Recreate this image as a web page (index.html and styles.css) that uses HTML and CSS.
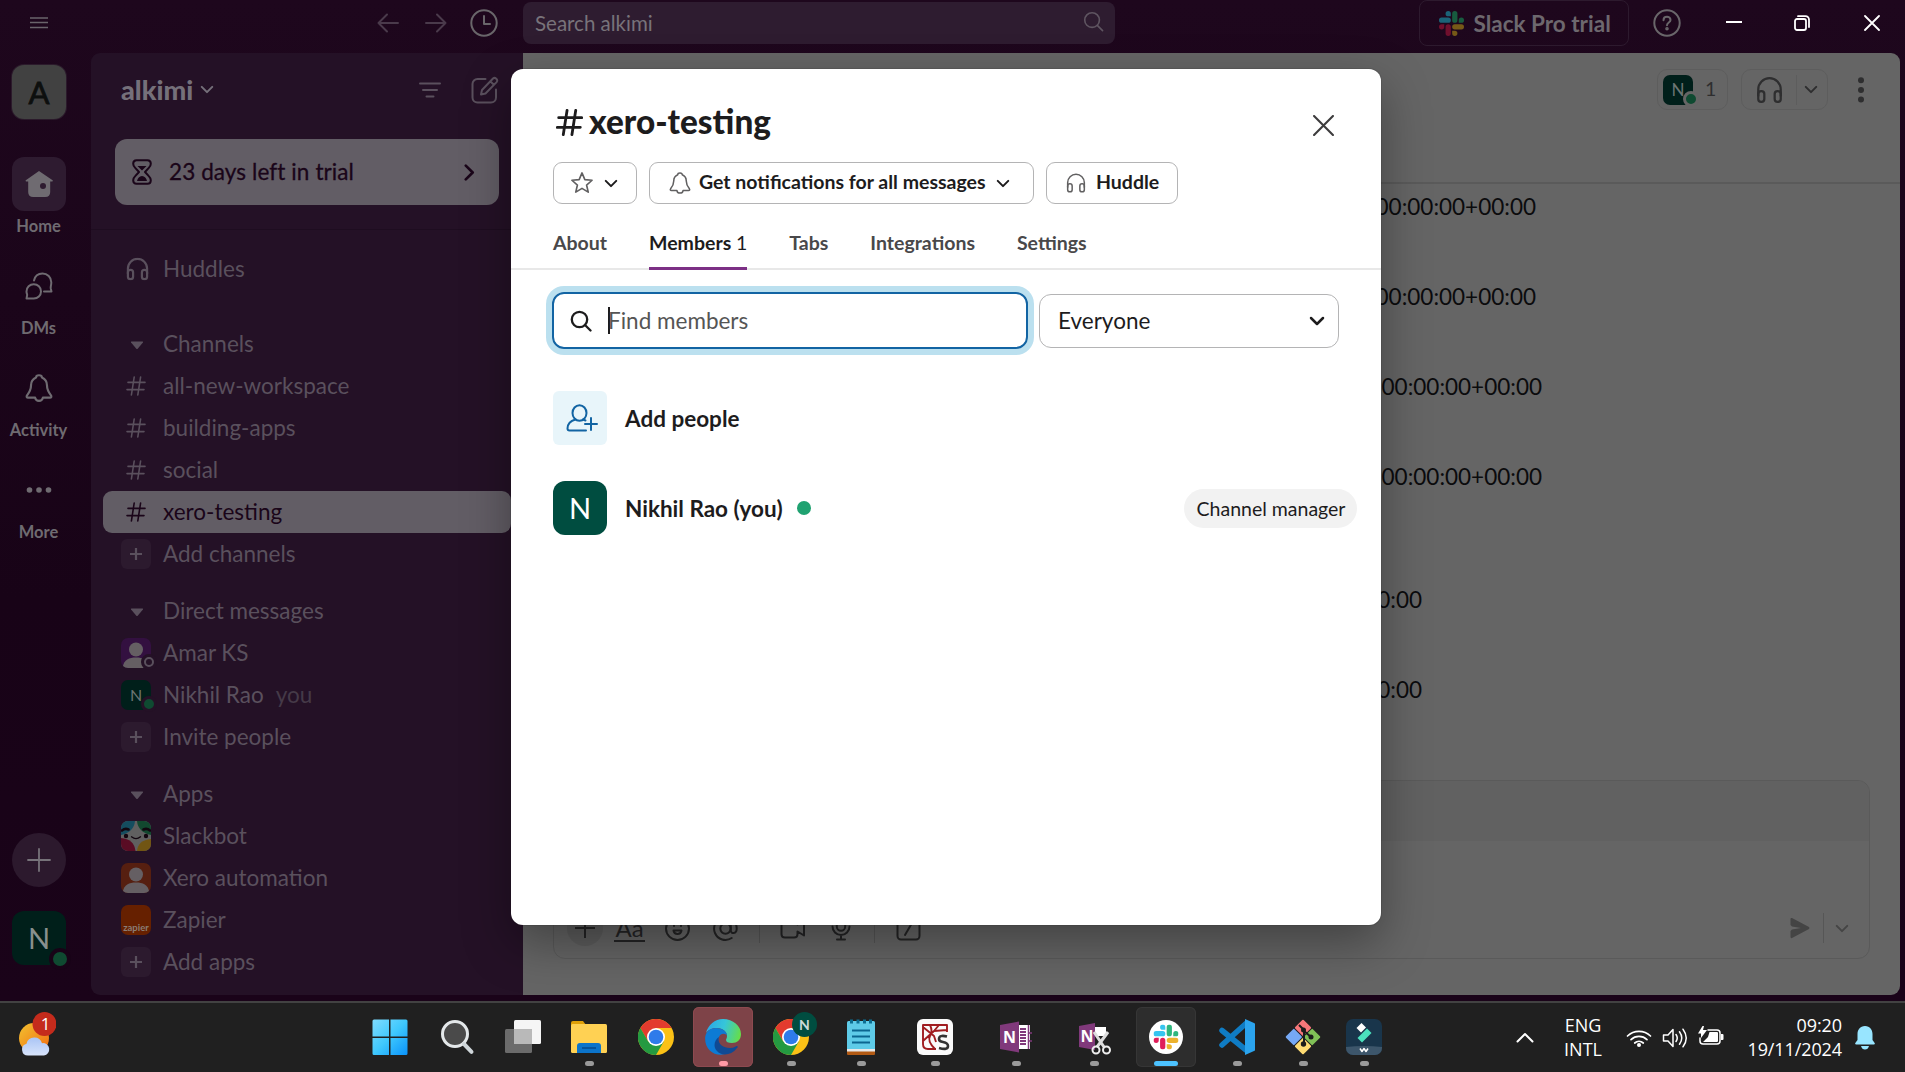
FILE: index.html
```html
<!DOCTYPE html>
<html lang="en">
<head>
<meta charset="utf-8">
<title>xero-testing - alkimi - Slack</title>
<link rel="stylesheet" href="styles.css">
</head>
<body>
<svg class="sprite" width="0" height="0" aria-hidden="true">
  <symbol id="hash" viewBox="0 0 20 20"><path d="M8.2 1 5.4 19M14.6 1l-2.8 18M2 6.4h17M1 13.6h17"/></symbol>
  <symbol id="headphones" viewBox="0 0 24 24"><path d="M2 17v-5.5a10 10 0 0 1 20 0V17"/><rect x="2" y="13" width="5.4" height="9.6" rx="2.6"/><rect x="16.6" y="13" width="5.4" height="9.6" rx="2.6"/></symbol>
  <symbol id="chev" viewBox="0 0 16 10"><path d="M2 2l6 6 6-6"/></symbol>
  <symbol id="caret" viewBox="0 0 14 9"><path d="M1.5.5h11q1 0 .4.9L7.9 7.6q-.9 1-1.8 0L1.1 1.4Q.5.5 1.5.5z"/></symbol>
  <symbol id="bell" viewBox="0 0 26 26"><path d="M13 1.2c-2.4 0-2.7 1.6-2.7 2C7.5 4.400 5.600 7 5.600 10.500c0 4.500-1.300 6.300-3.700 9.400-.8 1.100-.3 2 .9 2h6.600c.6 4 6.600 4 7.200 0h6.600c1.200 0 1.700-.9.900-2-2.400-3.100-3.700-4.900-3.700-9.400 0-3.500-1.900-6.100-4.700-7.300 0-.4-.3-2-2.700-2z"/></symbol>
  <symbol id="lens" viewBox="0 0 22 22"><circle cx="9.500" cy="9.500" r="7.700"/><path d="M15 15l5.500 5.500"/></symbol>
  <symbol id="person" viewBox="0 0 30 30"><rect width="30" height="30" rx="7"/><circle cx="15" cy="11.500" r="7" class="fig"/><path d="M2 28c1-6 6-8.500 13-8.500S27 22 28 28q-2 2-5 2H7q-3 0-5-2z" class="fig"/></symbol>
  <symbol id="slack" viewBox="0 0 24 24">
    <path fill="#e01e5a" d="M5.042 15.165a2.528 2.528 0 0 1-2.520 2.523A2.528 2.528 0 0 1 0 15.165a2.527 2.527 0 0 1 2.522-2.520h2.520v2.520zM6.313 15.165a2.527 2.527 0 0 1 2.521-2.520 2.527 2.527 0 0 1 2.521 2.520v6.313A2.528 2.528 0 0 1 8.834 24a2.528 2.528 0 0 1-2.521-2.522v-6.313z"/>
    <path fill="#36c5f0" d="M8.834 5.042a2.528 2.528 0 0 1-2.521-2.520A2.528 2.528 0 0 1 8.834 0a2.528 2.528 0 0 1 2.521 2.522v2.520H8.834zM8.834 6.313a2.528 2.528 0 0 1 2.521 2.521 2.528 2.528 0 0 1-2.521 2.521H2.522A2.528 2.528 0 0 1 0 8.834a2.528 2.528 0 0 1 2.522-2.521h6.312z"/>
    <path fill="#2eb67d" d="M18.956 8.834a2.528 2.528 0 0 1 2.522-2.521A2.528 2.528 0 0 1 24 8.834a2.528 2.528 0 0 1-2.522 2.521h-2.522V8.834zM17.688 8.834a2.528 2.528 0 0 1-2.523 2.521 2.527 2.527 0 0 1-2.520-2.521V2.522A2.527 2.527 0 0 1 15.165 0a2.528 2.528 0 0 1 2.523 2.522v6.312z"/>
    <path fill="#ecb22e" d="M15.165 18.956a2.528 2.528 0 0 1 2.523 2.522A2.528 2.528 0 0 1 15.165 24a2.527 2.527 0 0 1-2.520-2.522v-2.522h2.520zM15.165 17.688a2.527 2.527 0 0 1-2.520-2.523 2.526 2.526 0 0 1 2.520-2.520h6.313A2.527 2.527 0 0 1 24 15.165a2.528 2.528 0 0 1-2.522 2.523h-6.313z"/>
  </symbol>
  <symbol id="chrome" viewBox="0 0 36 36">
    <circle cx="18" cy="18" r="18" fill="#fbc116"/>
    <path fill="#e33b2e" d="M2.400 9A18 18 0 0 1 33.600 9H18L10.200 22.500z"/>
    <path fill="#249a41" d="M2.400 9A18 18 0 0 0 18 36l7.800-13.500H10.200z"/>
    <circle cx="18" cy="18" r="9" fill="#fff"/><circle cx="18" cy="18" r="7.300" fill="#2e7bea"/>
  </symbol>
</svg>

<div class="app">
  <header class="topbar">
    <svg class="menu" viewBox="0 0 18 12"><path d="M0 1h18M0 5.500h18M0 10.500h18"/></svg>
    <svg class="arrow back" viewBox="0 0 22 20"><path d="M21 10H1.500M10 1.500 1.500 10l8.500 8.500"/></svg>
    <svg class="arrow fwd" viewBox="0 0 22 20"><path d="M1 10h19.500M12 1.500l8.500 8.500-8.500 8.500"/></svg>
    <svg class="clock" viewBox="0 0 28 28"><circle cx="14" cy="14" r="12.700"/><path d="M14 7v8h6"/></svg>
    <div class="search"><span>Search alkimi</span><svg viewBox="0 0 22 22"><use href="#lens"/></svg></div>
    <div class="trial-pill"><svg viewBox="0 0 24 24"><use href="#slack"/></svg><span>Slack Pro trial</span></div>
    <div class="help"><svg viewBox="0 0 28 28"><circle cx="14" cy="14" r="12.700"/><path d="M10.500 11.200c0-4.600 7-4.300 7-.3 0 2.600-3.500 2.500-3.500 5.300"/><circle cx="14" cy="19.700" r=".8"/></svg></div>
    <svg class="win min" viewBox="0 0 16 16"><path d="M0 7h16"/></svg>
    <svg class="win max" viewBox="0 0 16 16"><rect x="1" y="4" width="11" height="11" rx="2"/><path d="M4 1.200h7.500a3.500 3.500 0 0 1 3.500 3.500V12"/></svg>
    <svg class="win close" viewBox="0 0 16 16"><path d="M1 1l14 14M15 1 1 15"/></svg>
  </header>

  <div class="workspace">
    <nav class="rail">
      <div class="team">A</div>
      <div class="rail-item home"><div class="tile"><svg viewBox="0 0 28 28"><path class="solid" d="M14 1 .8 10.200q-.6 1 .4 1.300h2v10.500q0 5 5 5h12q5 0 5-5V11.500h2q1-.3.400-1.300z"/><circle class="hole" cx="18" cy="16" r="3"/></svg></div><span>Home</span></div>
      <div class="rail-item"><div class="tile"><svg viewBox="0 0 28 28"><path d="M9 8.500C10 4 13.500 1.500 17.500 1.500a8.800 8.800 0 0 1 8.800 8.800c0 3.700-1 4-.5 6.500l.7 2.700h-7.500M8.800 12.200a7.200 7.200 0 1 1 0 14.400H1.500l.6-3.200c.4-1.500-.6-1.500-.6-4a7.200 7.200 0 0 1 7.300-7.200z"/></svg></div><span>DMs</span></div>
      <div class="rail-item"><div class="tile"><svg viewBox="0 0 26 26"><use href="#bell"/></svg></div><span>Activity</span></div>
      <div class="rail-item"><div class="tile"><svg viewBox="0 0 28 28"><circle class="solid" cx="4.500" cy="14" r="2.800"/><circle class="solid" cx="14" cy="14" r="2.800"/><circle class="solid" cx="23.500" cy="14" r="2.800"/></svg></div><span>More</span></div>
      <div class="create"><svg viewBox="0 0 24 24"><path d="M12 1v22M1 12h22"/></svg></div>
      <div class="me">N<i></i></div>
    </nav>

    <aside class="sidebar">
      <div class="side-head"><b>alkimi</b><svg class="dn" viewBox="0 0 16 10"><use href="#chev"/></svg>
        <svg class="filter" viewBox="0 0 22 16"><path d="M1 1.500h20M4 8h14M7.500 14.500h7"/></svg>
        <svg class="edit" viewBox="0 0 28 28"><path d="M14.500 3H6.500A5 5 0 0 0 1.500 8v13.500a5 5 0 0 0 5 5H20a5 5 0 0 0 5-5v-8M10 18.500l1-4.500L22 2.500q1.500-1.300 3.300.2 1.700 1.700.3 3.400L14.500 17.500zM19.500 5.500l3.400 3.300"/></svg></div>
      <div class="trial"><svg class="glass" viewBox="0 0 20 26"><path d="M4.500 1.200h11q3.300 0 3.300 3.500 0 2.200-2 4.200L13 13l3.800 4.100q2 2 2 4.200 0 3.500-3.300 3.500h-11q-3.300 0-3.300-3.500 0-2.200 2-4.200L7 13 3.200 8.900q-2-2-2-4.200 0-3.500 3.300-3.500z"/><path class="sand" d="M5.500 7h9L10 11.500zM5 22q1-4.500 5-5 4 .5 5 5z"/></svg><span>23 days left in trial</span><svg class="rt" viewBox="0 0 10 16"><path d="M1.500 1.500 8 8l-6.500 6.500"/></svg></div>
      <div class="side-line"></div>
      <div class="row huddles"><svg class="ico hp" viewBox="0 0 24 24"><use href="#headphones"/></svg><span>Huddles</span></div>

      <div class="row sec first"><svg class="caret" viewBox="0 0 14 9"><use href="#caret"/></svg><span>Channels</span></div>
      <div class="row"><svg class="ico" viewBox="0 0 20 20"><use href="#hash"/></svg><span>all-new-workspace</span></div>
      <div class="row"><svg class="ico" viewBox="0 0 20 20"><use href="#hash"/></svg><span>building-apps</span></div>
      <div class="row"><svg class="ico" viewBox="0 0 20 20"><use href="#hash"/></svg><span>social</span></div>
      <div class="row active"><svg class="ico" viewBox="0 0 20 20"><use href="#hash"/></svg><span>xero-testing</span></div>
      <div class="row"><div class="plus"><svg viewBox="0 0 12 12"><path d="M6 0v12M0 6h12"/></svg></div><span>Add channels</span></div>

      <div class="row sec"><svg class="caret" viewBox="0 0 14 9"><use href="#caret"/></svg><span>Direct messages</span></div>
      <div class="row"><div class="av"><svg class="amar" viewBox="0 0 30 30"><use href="#person"/></svg><i class="off"></i></div><span>Amar KS</span></div>
      <div class="row"><div class="av green">N<i></i></div><span>Nikhil Rao</span><span class="you">you</span></div>
      <div class="row"><div class="plus"><svg viewBox="0 0 12 12"><path d="M6 0v12M0 6h12"/></svg></div><span>Invite people</span></div>

      <div class="row sec"><svg class="caret" viewBox="0 0 14 9"><use href="#caret"/></svg><span>Apps</span></div>
      <div class="row"><div class="av"><svg class="bot" viewBox="0 0 30 30"><rect width="30" height="30" rx="7" fill="#606060"/><path fill="#144d5f" d="M0 14V7a7 7 0 0 1 7-7h7q-1 11-14 14z"/><path fill="#12482f" d="M16 0h7a7 7 0 0 1 7 7v7Q17 11 16 0z"/><path fill="#590c24" d="M0 17q13 1 14.500 13H7a7 7 0 0 1-7-7z"/><path fill="#715513" d="M30 18v5a7 7 0 0 1-7 7h-7q1-11 14-12z"/><path d="M1 9.500q3-2.500 6.500-1M22.500 8.500q3.500-1.500 6.500 1" stroke="#12060f" stroke-width="2.600" fill="none"/><path d="M10.500 15.800q4.500 3.500 9 0" stroke="#12060f" stroke-width="1.300" fill="none"/><circle cx="5" cy="15" r="2.200" fill="#12060f"/><circle cx="25" cy="15" r="2.200" fill="#12060f"/></svg></div><span>Slackbot</span></div>
      <div class="row"><div class="av"><svg class="xero" viewBox="0 0 30 30"><use href="#person"/></svg></div><span>Xero automation</span></div>
      <div class="row"><div class="av zap">zapier</div><span>Zapier</span></div>
      <div class="row"><div class="plus"><svg viewBox="0 0 12 12"><path d="M6 0v12M0 6h12"/></svg></div><span>Add apps</span></div>
    </aside>

    <main class="main">
      <div class="chan-head">
        <div class="pill members"><div class="av green">N<i></i></div><span>1</span></div>
        <div class="pill huddle"><svg class="hp" viewBox="0 0 24 24"><use href="#headphones"/></svg><i></i><svg class="dn" viewBox="0 0 16 10"><use href="#chev"/></svg></div>
        <svg class="kebab" viewBox="0 0 6 26"><circle cx="3" cy="3.300" r="3"/><circle cx="3" cy="13" r="3"/><circle cx="3" cy="22.500" r="3"/></svg>
      </div>
      <div class="msgs">
        <p class="a">00:00:00+00:00</p><p class="a">00:00:00+00:00</p><p class="b">00:00:00+00:00</p><p class="b">00:00:00+00:00</p><p class="c gap">00:00</p><p class="c">00:00</p>
      </div>
      <div class="composer">
        <div class="fmt"></div>
        <div class="actions">
          <div class="add"><svg viewBox="0 0 20 20"><path d="M10 0v20M0 10h20"/></svg></div>
          <span class="aa">Aa</span>
          <svg class="emoji" viewBox="0 0 25 25"><circle cx="12.500" cy="12.500" r="11.500"/><path d="M8.500 14.500c.8 4.500 7.200 4.500 8 0z"/><path d="M9 8v2M16 8v2"/></svg>
          <svg class="at" viewBox="0 0 25 25"><circle cx="12.500" cy="12.500" r="5.200"/><path d="M17.700 7.500v6.500c0 4.500 6 4 6-1.500a11.300 11.300 0 1 0-5 9.500"/></svg>
          <i></i>
          <svg class="video" viewBox="0 0 26 22"><path d="M5 1.500h9q3.500 0 3.500 3.500v2.500l6.500-4v15l-6.500-4V17q0 3.500-3.500 3.500H5Q1.500 20.500 1.500 17V5Q1.500 1.500 5 1.500z"/></svg>
          <svg class="mic" viewBox="0 0 20 26"><rect x="5.800" y="1.200" width="8.400" height="14.500" rx="4.200"/><path d="M1.500 11.500a8.500 8.500 0 0 0 17 0M10 20v4M6 24.500h8"/></svg>
          <i class="s2"></i>
          <svg class="slash" viewBox="0 0 25 25"><rect x="1.500" y="1.500" width="22" height="22" rx="3.500"/><path d="M16 7l-7 12"/></svg>
          <svg class="send" viewBox="0 0 20 22"><path d="M.5 2Q.5.500 2 1l17 9q1 1 0 2L2 21Q.5 21.500.500 20v-6l1.500-1.500 9-1.500-9-1.500L.500 8z"/></svg>
          <i class="s3"></i>
          <svg class="dn" viewBox="0 0 16 10"><use href="#chev"/></svg>
        </div>
      </div>
    </main>
  </div>

  <section class="modal">
    <div class="m-head"><svg class="hash" viewBox="0 0 20 20"><use href="#hash"/></svg><h1>xero-testing</h1>
      <svg class="x" viewBox="0 0 20 20"><path d="M1 1l18 18M19 1 1 19"/></svg></div>
    <div class="m-btns">
      <div class="btn star"><svg viewBox="0 0 24 24"><path d="M12 1l3.100 7.300 7.900.7-6 5.200 1.800 7.800L12 17.900 5.200 22 7 14.200 1 9l7.900-.7z"/></svg><svg class="dn" viewBox="0 0 16 10"><use href="#chev"/></svg></div>
      <div class="btn notif"><svg viewBox="0 0 26 26"><use href="#bell"/></svg><span>Get notifications for all messages</span><svg class="dn" viewBox="0 0 16 10"><use href="#chev"/></svg></div>
      <div class="btn hud"><svg viewBox="0 0 24 24"><use href="#headphones"/></svg><span>Huddle</span></div>
    </div>
    <div class="m-tabs"><span>About</span><span class="current">Members <em>1</em></span><span>Tabs</span><span>Integrations</span><span>Settings</span></div>
    <div class="m-find">
      <div class="find"><svg viewBox="0 0 22 22"><use href="#lens"/></svg><i></i><span>Find members</span></div>
      <div class="select"><span>Everyone</span><svg class="dn" viewBox="0 0 16 10"><use href="#chev"/></svg></div>
    </div>
    <div class="m-row"><div class="box blue"><svg viewBox="0 0 32 28"><ellipse cx="13.500" cy="9" rx="7" ry="7.800"/><path d="M9.500 15.500C4 17 1.500 20 1.500 24.500q0 2 2 2H20M17 15.500l2.500 1M25 14v12M19 20h12"/></svg></div><b>Add people</b></div>
    <div class="m-row last"><div class="box">N</div><b>Nikhil Rao (you)</b><i></i><span class="role">Channel manager</span></div>
  </section>
</div>

<footer class="taskbar">
  <svg class="weather" viewBox="0 0 40 46"><defs><linearGradient id="sun" x1="0" y1="0" x2="1" y2="1"><stop offset="0" stop-color="#f2c230"/><stop offset="1" stop-color="#f26a10"/></linearGradient><linearGradient id="cloud" x1="0" y1="0" x2="0" y2="1"><stop offset="0" stop-color="#a9c4f5"/><stop offset="1" stop-color="#d8e4fb"/></linearGradient></defs>
    <circle cx="18" cy="27" r="15" fill="url(#sun)"/><path fill="url(#cloud)" d="M12 44.500a6 6 0 0 1-1.500-11.800 8 8 0 0 1 15.500-.5 6.200 6.200 0 0 1 2 12.300z"/><circle cx="28.500" cy="13" r="12" fill="#c42b1c"/><text x="29.500" y="18.500" text-anchor="middle" class="cnt">1</text></svg>
  <div class="apps">
    <div class="t"><svg viewBox="0 0 36 36"><defs><linearGradient id="win" x1="0" y1="0" x2="1" y2="1"><stop offset="0" stop-color="#7fdcff"/><stop offset=".5" stop-color="#3fc8fd"/><stop offset="1" stop-color="#0a93fb"/></linearGradient></defs><path fill="url(#win)" d="M2 .5h15v17H.500V2Q.500.500 2 .500zM18.500.500H34q1.500 0 1.500 1.500v15.500h-17zM.500 19H17v17H2q-1.500 0-1.500-1.500zM18.500 19h17v15.500q0 1.500-1.500 1.500H18.500z"/></svg></div>
    <div class="t"><svg viewBox="0 0 36 36"><circle cx="16" cy="15" r="12.500" fill="#4a4a4a" stroke="#e4e8ea" stroke-width="3"/><path d="M25 25l7.500 7.800" stroke="#cfd6da" stroke-width="4" stroke-linecap="round"/></svg></div>
    <div class="t"><svg viewBox="0 0 36 36"><rect x="9" y="1" width="27" height="24" rx="1.500" fill="#f5f5f5"/><rect x="0" y="10" width="27" height="24" rx="1.500" fill="#6b6b6b"/><path d="M9 10h18v15H9z" fill="#b9b9b9"/></svg></div>
    <div class="t r"><svg viewBox="0 0 36 36"><path fill="#e0a008" d="M0 4q0-2 2-2h10l3 4v4H0z"/><rect y="5" width="36" height="29" rx="1.500" fill="#ffd153"/><path fill="#0c74ca" d="M6 34v-7q0-3 3-3h18q3 0 3 3v7z"/><path d="M11 29h14" stroke="#044a8c" stroke-width="1.500"/></svg></div>
    <div class="t"><svg viewBox="0 0 36 36"><use href="#chrome"/></svg></div>
    <div class="t r edge"><svg viewBox="0 0 36 36"><defs><linearGradient id="e1" x1="0" x2="1" y1=".3" y2=".5"><stop offset="0" stop-color="#2ba6e8"/><stop offset=".5" stop-color="#36c6d9"/><stop offset="1" stop-color="#65dd4c"/></linearGradient></defs><path fill="url(#e1)" d="M1 14C3 6 10 0 18 0c10 0 18 7 18 15 0 6-4 9-9 9-4 0-6-1-6-3 0-1 1-1.500 1-4 0-4-4-8-10-8C7 9 3 11 1 14z"/><path fill="#0d7bd4" d="M.2 18C1 12 6 9 11 9c7 0 11 4 11 8 0-2-6-4-8 1-3 8 3 14 10 15-10 7-25 0-23.800-15z"/><path fill="#104a93" d="M14 18c-2 6 3 11 11 11 4 0 6-2 7-2s1 1 0 2c-6 8-16 8-20 3-4-4-3-11 2-14z"/></svg></div>
    <div class="t r chr"><svg viewBox="0 0 36 36"><use href="#chrome"/></svg><em>N</em></div>
    <div class="t r"><svg viewBox="0 0 36 36"><rect x="4" y="2" width="28" height="29" rx="1.500" fill="#5ecbe8"/><path fill="#e8e8e8" d="M4 30h28v3H4z"/><path fill="#b25a14" d="M4 32.500h28V35q0 1-1 1H5q-1 0-1-1z"/><path d="M8.500.5v4M15 .5v4M21.500.5v4M27.500.5v4" stroke="#0c6e92" stroke-width="3"/><path d="M9 11.500h18M9 17.500h18M9 23.500h18" stroke="#0b6690" stroke-width="1.800"/></svg></div>
    <div class="t r"><svg viewBox="0 0 36 36"><rect width="36" height="36" rx="6" fill="#fafafa"/><path d="M30 13V6H6v19q0 5 5 5h8M6 22 17 12 30 11M13 6q3 6 0 11t5 13M6 8l11 9 2 6M22 6l-5 6" fill="none" stroke="#a01c20" stroke-width="1.900"/><path d="M30 17.500q-8-2-8 2.500 0 2.500 4 3 5 1 5 4 0 4.500-9 2" fill="none" stroke="#333" stroke-width="2.600"/></svg></div>
    <div class="t r"><svg viewBox="0 0 36 36"><path fill="#fff" d="M18 6h14v24H18z"/><path d="M22 10h6M22 13h6M22 16h6M22 19h6M22 22h6M22 25h6" stroke="#80397b"/><path d="M30.500 6v24M30 14h4M30 22h4" stroke="#80397b" stroke-width="1.500"/><path fill="#80397b" d="M2 6 21 2.500v31L2 30z"/><text x="11.500" y="24" text-anchor="middle" class="note">N</text></svg></div>
    <div class="t r"><svg viewBox="0 0 36 36"><path fill="#fff" d="M18 8h12v9H18z"/><path fill="#80397b" d="M3 7l16-3v27L3 28z"/><text x="11" y="23" text-anchor="middle" class="note">N</text><path d="M18 13l10 15M32 13 21 28" stroke="#ddd" stroke-width="3"/><circle cx="20" cy="31" r="3.500" fill="none" stroke="#eee" stroke-width="2"/><circle cx="30.500" cy="31" r="3.500" fill="none" stroke="#eee" stroke-width="2"/></svg></div>
    <div class="t r sl"><svg viewBox="0 0 36 36"><circle cx="18" cy="18" r="17" fill="#fff"/><svg x="5.500" y="5.500" width="25" height="25" viewBox="0 0 24 24"><use href="#slack"/></svg></svg></div>
    <div class="t r"><svg viewBox="0 0 36 36"><path d="M27 4.500 3 26M27 31 3 11.500" stroke="#0f7cc4" stroke-width="5.500" stroke-linecap="round"/><path fill="#2ba4ee" d="M26 0l9 4q1.500.7 1.500 2v24q0 1.300-1.500 2l-9 4z"/></svg></div>
    <div class="t r"><svg viewBox="0 0 36 36"><g transform="rotate(45 18 18)"><rect x="5.500" y="5.500" width="12" height="12" rx="1" fill="#f8777a"/><rect x="18.500" y="5.500" width="12" height="12" rx="1" fill="#80c157"/><rect x="5.500" y="18.500" width="12" height="12" rx="1" fill="#76a9f5"/><rect x="18.500" y="18.500" width="12" height="12" rx="1" fill="#ffdc73"/></g><path d="M14 6l5 5v15M19 12l7 6" stroke="#1c1c1c" stroke-width="2" fill="none"/><circle cx="18.500" cy="11" r="2.500" fill="#1c1c1c"/><circle cx="18.500" cy="25" r="2.700" fill="#1c1c1c"/><circle cx="26" cy="18" r="2.500" fill="#1c1c1c"/></svg></div>
    <div class="t r"><svg viewBox="0 0 36 36"><rect width="36" height="36" rx="7" fill="#19354b"/><path fill="#3d566b" d="M0 28q18-2 36 0v1a7 7 0 0 1-7 7H7a7 7 0 0 1-7-7z"/><path fill="#fff" d="M15.500 4l4.500 4.500-5 5L10.500 9z"/><path fill="#4be0bd" d="M21 9.500l4.500 4.500L16 23.500 11.500 19z"/><path d="M14 29.500l2 3 2-3 2 3 2-3" stroke="#fff" stroke-width="1.500" fill="none"/></svg></div>
  </div>
  <svg class="up" viewBox="0 0 18 11"><path d="M1.500 9.500 9 2l7.500 7.500"/></svg>
  <div class="lang">ENG<br>INTL</div>
  <svg class="wifi" viewBox="0 0 26 20"><path d="M1.500 8a16.500 16.500 0 0 1 23 0M5 11.700a11.500 11.500 0 0 1 16 0M8.700 15a6.500 6.500 0 0 1 8.600 0"/><circle cx="13" cy="17" r="2"/></svg>
  <svg class="spk" viewBox="0 0 26 20"><path d="M1.500 7h4.500l5-5.500v17L6 13H1.500zM14 6.500q2.500 3.500 0 7M17.500 3.800q4.500 6.200 0 12.400M21 1.200q6.500 8.800 0 17.600"/></svg>
  <svg class="bat" viewBox="0 0 26 20"><path class="o" d="M10 4h9q3 0 3 3v8q0 3-3 3H5q-3 0-3-3v-3"/><path class="f" d="M11.500 6H19q1 0 1 1v8q0 1-1 1H5l5-5zM23 8h1.500q1 0 1 1v4q0 1-1 1H23zM4.500 0 6 0 5 4h4L3 12V7.500H0z"/></svg>
  <div class="time">09:20<br>19/11/2024</div>
  <svg class="nb" viewBox="0 0 20 24"><path d="M10 0C5 0 2.500 4 2.500 8v6L.3 17q-.6 1.500 1 1.500h17.400q1.600 0 1-1.500l-2.200-3V8c0-4-2.500-8-7.500-8zM6 20h8q-1 3.500-4 3.500T6 20z"/></svg>
</footer>
</body>
</html>
```
FILE: styles.css
```css
* { box-sizing: border-box; }
body { margin: 0; width: 1905px; height: 1072px; overflow: hidden; background: #202020; font-family: Lato, "Liberation Sans", sans-serif; font-size: 22.5px; line-height: 1.2; }
svg { display: block; flex: none; fill: none; stroke: currentColor; stroke-width: 2; stroke-linecap: round; stroke-linejoin: round; }
i, em { font-style: normal; }
b { font-weight: 700; }
.sprite { position: absolute; }
.dn { width: 14px; height: 9px; stroke-width: 2.300; }

.app { position: relative; height: 1001px; overflow: hidden; background: linear-gradient(#1e071d, #180317 60%, #1a0319); }

/* Title bar */
.topbar { display: flex; align-items: center; height: 53px; padding: 0 25px 7px 30px; color: #69666a; }
.menu { width: 18px; height: 12px; stroke-width: 1.300; stroke-linecap: butt; color: #6a646b; }
.arrow { width: 22px; height: 20px; color: #4a3a4b; }
.back { margin-left: 329px; }
.fwd { margin-left: 26px; }
.clock { width: 28px; height: 28px; margin-left: 23px; }
.search { display: flex; align-items: center; justify-content: space-between; width: 593px; height: 42px; margin-left: 25px; padding: 0 11px 0 12px; border-radius: 8px; background: #2e1c30; font-size: 20.500px; color: #78737a; }
.search svg { width: 21px; height: 21px; margin-top: -3px; stroke-width: 1.700; color: #5f5561; }
.trial-pill { display: flex; align-items: center; width: 211px; height: 46px; margin-left: 304px; padding-left: 19px; border: 1px solid #2d1a2e; border-radius: 8px; font-weight: 700; color: #6d686e; white-space: nowrap; }
.trial-pill svg { width: 25px; height: 25px; margin-right: 10px; stroke: none; filter: brightness(.5); }
.help { margin-left: 24px; }
.help svg { width: 28px; height: 28px; }
.win { width: 16px; height: 16px; color: #fff; }
.min { margin-left: 45px; }
.max { margin-left: 52px; stroke-width: 1.800; }
.close { margin-left: 54px; stroke-width: 1.800; }

.workspace { display: flex; height: 942px; }

/* Rail */
.rail { display: flex; flex-direction: column; align-items: center; width: 91px; padding: 12px 13px 0 0; color: #77737a; }
.team { width: 54px; height: 54px; border-radius: 12px; background: #414141; color: #0d0f0e; font: 400 31px/55px Lato, sans-serif; -webkit-text-stroke: .8px #0d0f0e; text-align: center; box-shadow: 0 0 0 1px #2b1a2b; margin-bottom: 38px; }
.rail-item { display: flex; flex-direction: column; align-items: center; height: 102px; font-size: 16.500px; font-weight: 700; line-height: 20px; color: #6f6b71; }
.rail-item span { margin: 5px 1px 0 0; }
.tile { display: grid; place-items: center; width: 54px; height: 54px; border-radius: 12px; }
.tile svg { width: 28px; height: 28px; }
.home .tile { background: #2e1b30; }
.solid { fill: currentColor; stroke: none; }
.hole { fill: #2e1b30; stroke: none; }
.create { display: grid; place-items: center; width: 54px; height: 54px; margin-top: 268px; border-radius: 50%; background: #2c192d; }
.create svg { width: 24px; height: 24px; stroke-width: 1.800; }
.me { position: relative; width: 54px; height: 54px; margin-top: 24px; border-radius: 12px; background: #001f1a; font-size: 29px; line-height: 54px; text-align: center; color: #88908e; }
.me i { position: absolute; right: -5px; bottom: -5px; width: 22px; height: 22px; border: 4px solid #180317; border-radius: 50%; background: #0f4a31; }

/* Sidebar */
.sidebar { width: 432px; border-radius: 9px 0 0 9px; background: #241126; color: #5a505d; }
.side-head { display: flex; align-items: center; height: 74px; padding: 0 24px 0 30px; }
.side-head b { font-size: 27px; font-weight: 900; color: #75707a; }
.side-head .dn { margin: -2px 0 0 7px; color: #75707a; }
.filter { width: 22px; height: 16px; margin-left: auto; }
.edit { width: 28px; height: 28px; margin: -1px 0 0 30px; }
.trial { display: flex; align-items: center; width: 384px; height: 66px; margin: 12px 0 0 24px; padding: 0 24px 0 17px; border-radius: 12px; background: #625d65; color: #1a0519; }
.trial span { padding-bottom: 1px; letter-spacing: .1px; -webkit-text-stroke: .3px; }
.trial .glass { width: 20px; height: 26px; margin-right: 17px; }
.sand { fill: currentColor; stroke: none; }
.trial .rt { width: 11px; height: 17px; margin-left: auto; stroke-width: 2.500; }
.side-line { height: 1px; margin: 24px 0 18px; background: #1e0d20; }
.row { display: flex; align-items: center; height: 42px; margin-left: 12px; white-space: nowrap; }
.row > span { padding-bottom: 2px; }
.row > :first-child { margin-left: 18px; margin-right: 12px; }
.row > .ico { width: 20px; height: 20px; margin: 0 17px 0 23px; stroke-width: 1.600; }
.row > .hp { width: 23px; height: 24px; margin-right: 14px; stroke-width: 2.300; }
.row > .caret { width: 14px; height: 9px; margin: 2px 19px 0 27px; fill: currentColor; stroke: none; }
.sec { margin-top: 15px; }
.first { margin-top: 33px; }
.active { margin-right: 12px; border-radius: 9px; background: #625d65; color: #1a0519; }
.plus { display: grid; place-items: center; width: 30px; height: 30px; border-radius: 6px; background: #2c1a2e; }
.plus svg { width: 12px; height: 12px; stroke-width: 2.200; }
.av { position: relative; width: 30px; height: 30px; border-radius: 7px; }
.av svg { width: 30px; height: 30px; stroke: none; }
.av.green { background: #001f1a; color: #6d7573; font-size: 16px; line-height: 30px; text-align: center; }
.av i { position: absolute; right: -6px; bottom: -2px; width: 16px; height: 16px; border: 3px solid #241126; border-radius: 50%; background: #0f4a31; }
.av i.off { background: #5a505d; }
.av i.off::after { content: ""; display: block; width: 6px; height: 6px; margin: 2px; border-radius: 50%; background: #241126; }
.amar { fill: #331040; }
.xero { fill: #561f10; }
.fig { fill: #655f63; }
.zap { background: #662000; color: #8b7d74; font: 700 9.500px/45px Lato, sans-serif; text-align: center; }
.you { margin-left: 12px; color: #453a48; }

/* Channel view */
.main { display: flex; flex-direction: column; width: 1377px; border-radius: 0 9px 9px 0; background: #656565; }
.chan-head { display: flex; align-items: flex-start; justify-content: flex-end; height: 131px; padding: 16px 36px 0 0; border-bottom: 2px solid #5a5a5a; color: #2e2e2f; }
.pill { display: flex; align-items: center; height: 41px; border: 1px solid #5d5d5d; border-radius: 10px; }
.members { width: 71px; padding-left: 5px; margin-right: 13px; font-size: 19.500px; }
.members span { margin: -2px 0 0 12px; }
.members .av.green { font-size: 17px; }
.members .av i { border-color: #656565; right: -6px; bottom: -2px; }
.huddle { width: 87px; padding-left: 14px; margin-right: 30px; }
.huddle .hp { width: 27px; height: 28px; }
.huddle i { width: 1px; height: 30px; margin: 0 7px 0 13px; background: #5d5d5d; }
.kebab { width: 6px; height: 26px; margin-top: 8px; fill: currentColor; stroke: none; }
.msgs { height: 597px; padding-top: 8px; color: #0b0b0d; text-align: right; }
.msgs p { height: 30px; margin: 0 0 60px; line-height: 30px; }
.msgs .a { padding-right: 364px; }
.msgs .b { padding-right: 358px; }
.msgs .c { padding-right: 478px; }
.msgs .gap { margin-top: 93px; }
.composer { display: flex; flex-direction: column; width: 1317px; height: 179px; margin: -1px 0 0 30px; border: 1px solid #5a5a5a; border-radius: 12px; overflow: hidden; color: #242425; }
.fmt { height: 60px; background: #616161; }
.actions { display: flex; align-items: center; height: 36px; margin-top: 69px; padding: 0 20px 0 13px; }
.actions i { width: 1px; height: 30px; margin-left: 21px; background: #565656; }
.add { display: grid; place-items: center; width: 36px; height: 36px; border-radius: 50%; background: #5d5d5d; }
.add svg { width: 20px; height: 20px; }
.aa { width: 31px; height: 28px; margin-left: 11px; border-bottom: 2px solid; line-height: 28px; text-align: center; font-size: 24px; }
.emoji { width: 25px; height: 25px; margin-left: 20px; }
.at { width: 25px; height: 25px; margin-left: 23px; }
.video { width: 26px; height: 22px; margin-left: 20px; }
.mic { width: 20px; height: 26px; margin-left: 25px; }
.actions .s2 { margin-left: 23px; }
.slash { width: 25px; height: 25px; margin-left: 21px; }
.send { width: 20px; height: 22px; margin-left: auto; fill: #444; stroke: none; }
.actions .s3 { margin-left: 13px; }
.actions .dn { margin-left: 11px; color: #454545; }

/* Channel details dialog */
.modal { position: absolute; left: 511px; top: 69px; width: 870px; height: 856px; padding-top: 33px; border-radius: 12px; background: #fff; color: #1d1c1d; box-shadow: 0 0 0 1px rgba(29,28,29,.13), 0 18px 48px rgba(0,0,0,.35); }
.m-head { display: flex; align-items: center; height: 40px; padding: 0 45px; }
.m-head .hash { width: 27px; height: 27px; margin-top: 1px; stroke-width: 2.100; }
.m-head h1 { margin: -2px 0 0 6px; font-size: 33.300px; font-weight: 900; line-height: 40px; }
.m-head .x { width: 21px; height: 21px; margin: 7px 2px 0 auto; stroke-width: 2; color: #3d3c3d; }
.m-btns { display: flex; gap: 12px; margin: 20px 0 0 42px; }
.btn { display: flex; align-items: center; height: 42px; border: 1px solid #b4b4b5; border-radius: 9px; font-size: 19.500px; font-weight: 700; white-space: nowrap; }
.btn span { padding-bottom: 2px; }
.btn svg:first-child { width: 22px; height: 22px; color: #616061; stroke-width: 1.800; }
.star { width: 84px; padding-left: 17px; }
.star .dn { margin-left: 11px; }
.notif { width: 385px; padding-left: 19px; }
.notif span { margin-left: 8px; }
.notif .dn { margin-left: 10px; }
.hud { width: 132px; padding-left: 19px; }
.hud svg:first-child { width: 20px; height: 20px; }
.hud span { margin-left: 10px; }
.m-tabs { display: flex; gap: 42px; height: 54px; margin-top: 12px; padding-left: 42px; border-bottom: 2px solid #e8e8e8; font-size: 19.500px; font-weight: 700; line-height: 53px; color: #49484a; white-space: nowrap; }
.m-tabs .current { height: 54px; border-bottom: 3px solid #7c3085; color: #1d1c1d; }
.m-tabs em { font-weight: 400; }
.m-find { display: flex; gap: 11px; align-items: center; margin: 22px 0 0 41px; }
.find { display: flex; align-items: center; width: 476px; height: 57px; padding-left: 16px; border: 2px solid #1264a3; border-radius: 12px; box-shadow: 0 0 0 6px #bbe0ef; color: #555; }
.find svg { width: 22px; height: 22px; color: #1d1c1d; stroke-width: 2.300; }
.find i { width: 2px; height: 27px; margin: 0 -2px 0 16px; background: #1d1c1d; }
.select { display: flex; align-items: center; justify-content: space-between; width: 300px; height: 54px; padding: 0 13px 0 18px; border: 1px solid #b4b4b5; border-radius: 12px; }
.select .dn { width: 16px; height: 10px; stroke-width: 2.500; }
.m-row { display: flex; align-items: center; height: 54px; margin: 42px 24px 0 42px; }
.last { margin-top: 36px; }
.box { display: grid; place-items: center; width: 54px; height: 54px; margin-right: 18px; border-radius: 12px; background: #004d40; color: #fff; font-size: 29px; }
.blue { border-radius: 6px; background: #e8f5fa; color: #1264a3; }
.blue svg { width: 32px; height: 28px; margin-left: 3px; }
.m-row > i { width: 14px; height: 14px; margin-left: 14px; border-radius: 50%; background: #20a271; }
.role { height: 39px; width: 173px; margin-left: auto; padding-left: 1px; border-radius: 20px; background: #f2f2f2; font-size: 19.500px; line-height: 39px; text-align: center; white-space: nowrap; }

/* Taskbar */
.taskbar { display: flex; align-items: center; height: 71px; border-top: 2px solid #424242; background: #202020; color: #fff; }
.weather { width: 40px; height: 46px; margin-left: 16px; margin-top: -7px; stroke: none; }
.cnt { fill: #fff; font: 17px "Open Sans", sans-serif; }
.apps { display: flex; margin-left: 304px; height: 60px; margin-top: -1px; }
.t { position: relative; display: grid; place-items: center; width: 60px; height: 60px; border-radius: 6px; }
.t > svg { width: 36px; height: 36px; }
.t > svg, .t svg svg { stroke: none; stroke-linecap: butt; }
.r::after { content: ""; position: absolute; left: 26px; bottom: 1px; width: 9px; height: 5px; border-radius: 3px; background: #9a9a9a; }
.t:nth-child(2) { margin-left: 7px; }
.t:nth-child(3), .t:nth-child(4), .t:nth-child(14) { margin-left: 6px; }
.t:nth-child(5), .t:nth-child(6) { margin-left: 7px; }
.t:nth-child(7) { margin-left: 8px; }
.t:nth-child(8) { margin-left: 10px; }
.t:nth-child(9) { margin-left: 14px; }
.t:nth-child(10) { margin-left: 21px; }
.t:nth-child(11) { margin-left: 18px; }
.t:nth-child(12) { margin-left: 12px; }
.t:nth-child(13) { margin-left: 11px; }
.t:nth-child(15) { margin-left: 1px; }
.edge { background: #7e4348; box-shadow: inset 0 0 0 1px #8d4a50; }
.edge::after { background: #ff9aa5; }
.chr em { position: absolute; left: 31px; top: 5px; width: 25px; height: 25px; border-radius: 50%; background: #004d40; font-size: 14px; font-weight: 700; line-height: 25px; text-align: center; color: #ccdbd9; }
.note { fill: #fff; font: 700 16px "Open Sans", sans-serif; }
.sl { background: #2d2d2d; box-shadow: inset 0 0 0 1px #363636; }
.sl::after { left: 18px; width: 24px; background: #4cc2ff; }
.up { width: 18px; height: 11px; margin-left: 122px; }
.lang, .time { padding-bottom: 1px; font: 18px/24px "Open Sans", "Noto Sans", sans-serif; }
.lang { width: 40px; margin-left: 29px; text-align: center; }
.wifi { width: 26px; height: 20px; margin-left: 23px; stroke-width: 1.700; }
.wifi circle { fill: #fff; stroke: none; }
.spk { width: 26px; height: 20px; margin-left: 10px; stroke-width: 1.500; }
.bat { width: 26px; height: 20px; margin-left: 10px; margin-top: -3px; }
.bat .o { stroke-width: 1.500; }
.bat .f { fill: #fff; stroke: none; }
.time { width: 118px; text-align: right; letter-spacing: -.1px; }
.nb { width: 20px; height: 24px; margin-left: 13px; fill: #98e5ff; stroke: none; }
```
